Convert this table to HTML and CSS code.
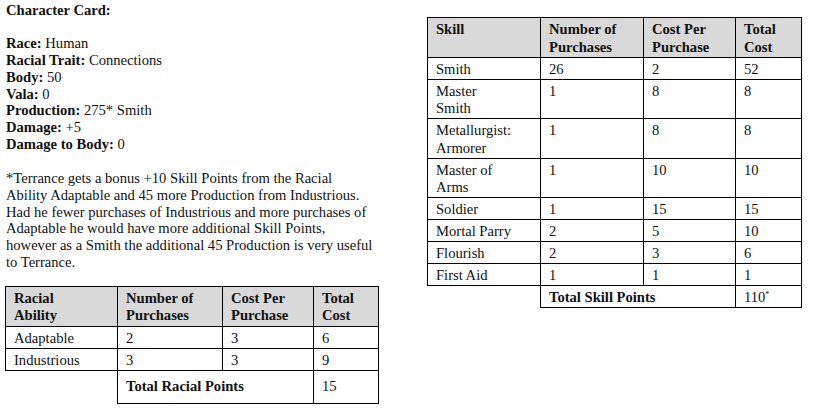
FILE: index.html
```html
<!DOCTYPE html>
<html>
<head>
<meta charset="utf-8">
<link rel="stylesheet" href="styles.css">
</head>
<body>
<div class="page">
  <div class="left">
    <div class="info">
      <b>Character Card:</b><br><br>
      <b>Race:</b> Human<br>
      <b>Racial Trait:</b> Connections<br>
      <b>Body:</b> 50<br>
      <b>Vala:</b> 0<br>
      <b>Production:</b> 275* Smith<br>
      <b>Damage:</b> +5<br>
      <b>Damage to Body:</b> 0
    </div>
    <p class="note">*Terrance gets a bonus +10 Skill Points from the Racial<br>Ability Adaptable and 45 more Production from Industrious.<br>Had he fewer purchases of Industrious and more purchases of<br>Adaptable he would have more additional Skill Points,<br>however as a Smith the additional 45 Production is very useful<br>to Terrance.</p>
    <table class="grid racial">
      <colgroup><col class="c1"><col class="c2"><col class="c3"><col class="c4"></colgroup>
      <tr class="head"><th>Racial<br>Ability</th><th>Number of<br>Purchases</th><th>Cost Per<br>Purchase</th><th>Total<br>Cost</th></tr>
      <tr><td>Adaptable</td><td>2</td><td>3</td><td>6</td></tr>
      <tr><td>Industrious</td><td>3</td><td>3</td><td>9</td></tr>
      <tr class="total"><td class="blank"></td><th colspan="2">Total Racial Points</th><td>15</td></tr>
    </table>
  </div>
  <div class="right">
    <table class="grid skills">
      <colgroup><col class="c1"><col class="c2"><col class="c3"><col class="c4"></colgroup>
      <tr class="head"><th>Skill</th><th>Number of<br>Purchases</th><th>Cost Per<br>Purchase</th><th>Total<br>Cost</th></tr>
      <tr><td>Smith</td><td>26</td><td>2</td><td>52</td></tr>
      <tr><td>Master<br>Smith</td><td>1</td><td>8</td><td>8</td></tr>
      <tr><td>Metallurgist:<br>Armorer</td><td>1</td><td>8</td><td>8</td></tr>
      <tr><td>Master of<br>Arms</td><td>1</td><td>10</td><td>10</td></tr>
      <tr><td>Soldier</td><td>1</td><td>15</td><td>15</td></tr>
      <tr><td>Mortal Parry</td><td>2</td><td>5</td><td>10</td></tr>
      <tr><td>Flourish</td><td>2</td><td>3</td><td>6</td></tr>
      <tr><td>First Aid</td><td>1</td><td>1</td><td>1</td></tr>
      <tr class="stotal"><td class="blank"></td><th colspan="2">Total Skill Points</th><td>110<sup>*</sup></td></tr>
    </table>
  </div>
</div>
</body>
</html>
```
FILE: styles.css
```css
html, body {
  margin: 0;
  padding: 0;
  background: #ffffff;
}
body {
  font-family: "Liberation Serif", "Times New Roman", serif;
  font-size: 14.6px;
  line-height: 16.7px;
  color: #111111;
}
.page {
  display: flex;
  align-items: flex-start;
  gap: 49px;
  padding: 2px 0 0 5px;
}
.left {
  width: 373px;
  flex: none;
}
.info {
  padding-left: 1px;
}
.note {
  margin: 18px 0 15px 0;
  padding-left: 1px;
  white-space: nowrap;
}
.right {
  flex: none;
  margin-top: 15px;
}
.grid {
  border-collapse: collapse;
  table-layout: fixed;
  line-height: 17.5px;
}
.grid th, .grid td {
  border: 1px solid #000000;
  padding: 3px 8px 0.5px 8px;
  text-align: left;
  vertical-align: top;
}
.grid th {
  font-weight: bold;
}
.grid .head th {
  background: #d9d9d9;
}
.grid .blank {
  border: none;
}
.racial {
  width: 373px;
}
.racial .c1 { width: 112px; }
.racial .c2 { width: 105px; }
.racial .c3 { width: 91px; }
.racial .c4 { width: 65px; }
.racial .head th {
  padding-bottom: 1.5px;
}
.racial .total th, .racial .total td {
  height: 32px;
  padding-top: 0;
  padding-bottom: 0;
  vertical-align: middle;
}
.skills {
  width: 374px;
}
.skills .c1 { width: 113px; }
.skills .c2 { width: 103px; }
.skills .c3 { width: 92px; }
.skills .c4 { width: 66px; }
.grid sup {
  font-size: 8px;
  line-height: 0;
  vertical-align: 5px;
}
```
